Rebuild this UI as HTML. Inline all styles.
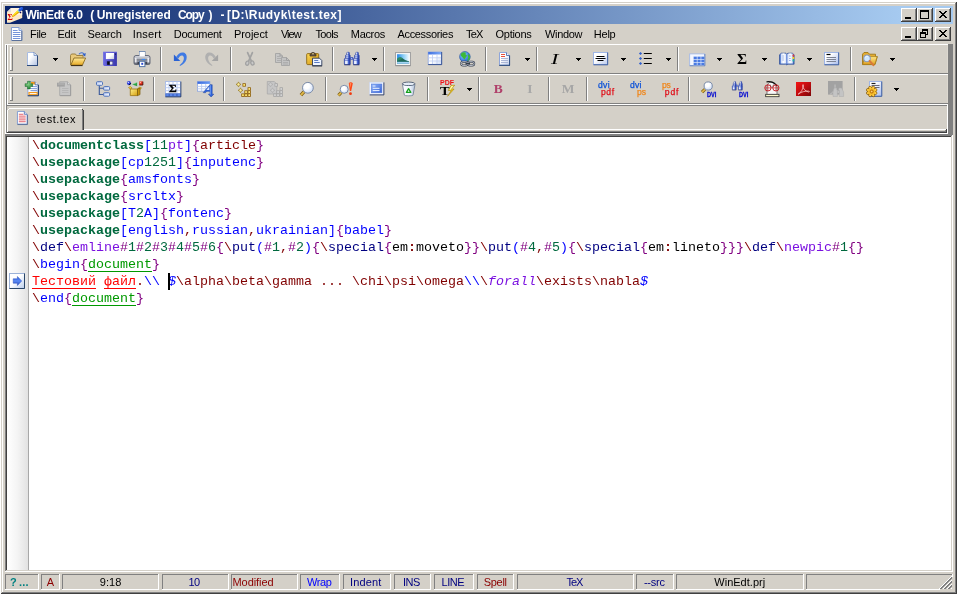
<!DOCTYPE html>
<html lang="en"><head><meta charset="utf-8"><title>WinEdt 6.0 - test.tex</title>
<style>
html,body{margin:0;padding:0;}
body{will-change:transform;width:958px;height:597px;background:#fff;position:relative;overflow:hidden;font-family:'Liberation Sans','DejaVu Sans',sans-serif;font-size:11px;}
body>div,body>span,body>svg{position:absolute;}
.ln{font-family:'Liberation Mono','DejaVu Sans Mono',monospace;font-size:13.3333px;line-height:17px;}
span{white-space:pre;}
svg{overflow:visible;}
</style></head><body>
<div style="left:1px;top:2px;width:956px;height:592px;background:#d4d0c8;"></div>
<div style="left:1px;top:593px;width:956px;height:1px;background:#404040;"></div>
<div style="left:956px;top:2px;width:1px;height:592px;background:#404040;"></div>
<div style="left:2px;top:592px;width:954px;height:1px;background:#808080;"></div>
<div style="left:955px;top:3px;width:1px;height:590px;background:#808080;"></div>
<div style="left:2px;top:3px;width:953px;height:1px;background:#fff;"></div>
<div style="left:2px;top:3px;width:1px;height:589px;background:#fff;"></div>
<div style="left:5px;top:6px;width:948px;height:18px;background:linear-gradient(to right,#0a246a 0%,#a6caf0 94.5%);"></div>
<svg style="left:7px;top:7px" width="16" height="16" viewBox="0 0 16 16">
<polygon points="0,5 4,1 12,1 15.200,4.500 15.200,11 3,15.700 0,15.700" fill="#fde8c6"/>
<polygon points="4,1 12,1 15.200,4.500 15.200,8 4,8" fill="#fff3de"/>
<polygon points="0,5 4,1 4,5" fill="#e4dcd4"/>
<text x="0.600" y="13" font-family="Liberation Serif,serif" font-weight="bold" font-size="8" fill="#d40000">Σ</text>
<polygon points="4.800,10.200 5.600,8.200 10.600,3.600 12.400,5.400 7,9.600" fill="#eaa400"/>
<polygon points="5.600,8.200 10.600,3.600 11.500,4.500 6.300,9" fill="#ffe920"/>
<polygon points="10.400,3.800 12.200,5.600 13,4.800 11.200,3" fill="#7fd6c4"/>
<polygon points="11.200,3 13,4.800 16.200,2 15.600,0 13.600,0.200" fill="#1f55dc"/>
<polygon points="12.200,1.400 14,0.400 15.200,0.600 13,2.400" fill="#4a7cf0"/>
<polygon points="13,4.800 12.400,5.800 14,6.400 14.400,5" fill="#1a1060"/>
</svg>
<span class="t tt" style="left:25.4px;top:6.84px;line-height:16px;font-size:12px;color:#fff;font-family:'Liberation Sans','DejaVu Sans',sans-serif;font-weight:bold;letter-spacing:-0.411px;">WinEdt 6.0</span>
<span class="t tt" style="left:90.2px;top:6.84px;line-height:16px;font-size:12px;color:#fff;font-family:'Liberation Sans','DejaVu Sans',sans-serif;font-weight:bold;letter-spacing:-1.2px;">(</span>
<span class="t tt" style="left:96.7px;top:6.84px;line-height:16px;font-size:12px;color:#fff;font-family:'Liberation Sans','DejaVu Sans',sans-serif;font-weight:bold;">Unregistered</span>
<span class="t tt" style="left:177.9px;top:6.84px;line-height:16px;font-size:12px;color:#fff;font-family:'Liberation Sans','DejaVu Sans',sans-serif;font-weight:bold;letter-spacing:-1.033px;">Copy</span>
<span class="t tt" style="left:208.5px;top:6.84px;line-height:16px;font-size:12px;color:#fff;font-family:'Liberation Sans','DejaVu Sans',sans-serif;font-weight:bold;">)</span>
<span class="t tt" style="left:220.4px;top:6.84px;line-height:16px;font-size:12px;color:#fff;font-family:'Liberation Sans','DejaVu Sans',sans-serif;font-weight:bold;letter-spacing:0.1px;">-</span>
<span class="t tt" style="left:227px;top:6.84px;line-height:16px;font-size:12px;color:#fff;font-family:'Liberation Sans','DejaVu Sans',sans-serif;font-weight:bold;letter-spacing:0.467px;">[D:\Rudyk\test.tex]</span>
<div style="left:901px;top:8px;width:16px;height:14px;background:#d4d0c8;"></div>
<div style="left:901px;top:8px;width:15px;height:1px;background:#fff;"></div>
<div style="left:901px;top:8px;width:1px;height:13px;background:#fff;"></div>
<div style="left:901px;top:21px;width:16px;height:1px;background:#404040;"></div>
<div style="left:916px;top:8px;width:1px;height:14px;background:#404040;"></div>
<div style="left:902px;top:20px;width:14px;height:1px;background:#808080;"></div>
<div style="left:915px;top:9px;width:1px;height:12px;background:#808080;"></div>
<div style="left:905px;top:17px;width:6px;height:2px;background:#000;"></div>
<div style="left:917px;top:8px;width:16px;height:14px;background:#d4d0c8;"></div>
<div style="left:917px;top:8px;width:15px;height:1px;background:#fff;"></div>
<div style="left:917px;top:8px;width:1px;height:13px;background:#fff;"></div>
<div style="left:917px;top:21px;width:16px;height:1px;background:#404040;"></div>
<div style="left:932px;top:8px;width:1px;height:14px;background:#404040;"></div>
<div style="left:918px;top:20px;width:14px;height:1px;background:#808080;"></div>
<div style="left:931px;top:9px;width:1px;height:12px;background:#808080;"></div>
<div style="left:920px;top:10px;width:9px;height:9px;background:#000;"></div>
<div style="left:921px;top:12px;width:7px;height:6px;background:#d4d0c8;"></div>
<div style="left:935px;top:8px;width:16px;height:14px;background:#d4d0c8;"></div>
<div style="left:935px;top:8px;width:15px;height:1px;background:#fff;"></div>
<div style="left:935px;top:8px;width:1px;height:13px;background:#fff;"></div>
<div style="left:935px;top:21px;width:16px;height:1px;background:#404040;"></div>
<div style="left:950px;top:8px;width:1px;height:14px;background:#404040;"></div>
<div style="left:936px;top:20px;width:14px;height:1px;background:#808080;"></div>
<div style="left:949px;top:9px;width:1px;height:12px;background:#808080;"></div>
<svg style="left:939px;top:11px" width="8" height="7" viewBox="0 0 8 7" shape-rendering="crispEdges"><path d="M0,0h2v1h1v1h2v-1h1v-1h2v1h-1v1h-1v1h-1v1h1v1h1v1h1v1h-2v-1h-1v-1h-2v1h-1v1h-2v-1h1v-1h1v-1h1v-1h-1v-1h-1v-1h-1z" fill="#000"/></svg>
<div style="left:901px;top:27px;width:16px;height:14px;background:#d4d0c8;"></div>
<div style="left:901px;top:27px;width:15px;height:1px;background:#fff;"></div>
<div style="left:901px;top:27px;width:1px;height:13px;background:#fff;"></div>
<div style="left:901px;top:40px;width:16px;height:1px;background:#404040;"></div>
<div style="left:916px;top:27px;width:1px;height:14px;background:#404040;"></div>
<div style="left:902px;top:39px;width:14px;height:1px;background:#808080;"></div>
<div style="left:915px;top:28px;width:1px;height:12px;background:#808080;"></div>
<div style="left:905px;top:36px;width:6px;height:2px;background:#000;"></div>
<div style="left:917px;top:27px;width:16px;height:14px;background:#d4d0c8;"></div>
<div style="left:917px;top:27px;width:15px;height:1px;background:#fff;"></div>
<div style="left:917px;top:27px;width:1px;height:13px;background:#fff;"></div>
<div style="left:917px;top:40px;width:16px;height:1px;background:#404040;"></div>
<div style="left:932px;top:27px;width:1px;height:14px;background:#404040;"></div>
<div style="left:918px;top:39px;width:14px;height:1px;background:#808080;"></div>
<div style="left:931px;top:28px;width:1px;height:12px;background:#808080;"></div>
<div style="left:922px;top:29px;width:6px;height:6px;background:#000;"></div>
<div style="left:923px;top:31px;width:4px;height:3px;background:#d4d0c8;"></div>
<div style="left:920px;top:32px;width:6px;height:6px;background:#000;"></div>
<div style="left:921px;top:34px;width:4px;height:3px;background:#d4d0c8;"></div>
<div style="left:935px;top:27px;width:16px;height:14px;background:#d4d0c8;"></div>
<div style="left:935px;top:27px;width:15px;height:1px;background:#fff;"></div>
<div style="left:935px;top:27px;width:1px;height:13px;background:#fff;"></div>
<div style="left:935px;top:40px;width:16px;height:1px;background:#404040;"></div>
<div style="left:950px;top:27px;width:1px;height:14px;background:#404040;"></div>
<div style="left:936px;top:39px;width:14px;height:1px;background:#808080;"></div>
<div style="left:949px;top:28px;width:1px;height:12px;background:#808080;"></div>
<svg style="left:939px;top:30px" width="8" height="7" viewBox="0 0 8 7" shape-rendering="crispEdges"><path d="M0,0h2v1h1v1h2v-1h1v-1h2v1h-1v1h-1v1h-1v1h1v1h1v1h1v1h-2v-1h-1v-1h-2v1h-1v1h-2v-1h1v-1h1v-1h1v-1h-1v-1h-1v-1h-1z" fill="#000"/></svg>
<svg style="left:11px;top:27px" width="11.300" height="14" viewBox="0 0 12 14" preserveAspectRatio="none">
<path d="M0.5,0.5h8l3,3v10h-11z" fill="#fff" stroke="#7f9ad0" stroke-width="1"/>
<path d="M8.5,0.5v3h3" fill="#dfe8f8" stroke="#7f9ad0" stroke-width="1"/>
<path d="M2,3.5h5M2,5.5h8M2,7.5h8M2,9.5h8M2,11.5h8" stroke="#6f8fd8" stroke-width="1"/>
<path d="M1,13.5h10.5M11.5,4v9.5" stroke="#5a6f98" stroke-width="1" fill="none"/>
</svg>
<span class="t mn" style="left:30px;top:26.19px;line-height:16px;font-size:11px;color:#000;font-family:'Liberation Sans','DejaVu Sans',sans-serif;letter-spacing:-0.333px;">File</span>
<span class="t mn" style="left:57.4px;top:26.19px;line-height:16px;font-size:11px;color:#000;font-family:'Liberation Sans','DejaVu Sans',sans-serif;letter-spacing:-0.133px;">Edit</span>
<span class="t mn" style="left:87.5px;top:26.19px;line-height:16px;font-size:11px;color:#000;font-family:'Liberation Sans','DejaVu Sans',sans-serif;letter-spacing:-0.1px;">Search</span>
<span class="t mn" style="left:132.7px;top:26.19px;line-height:16px;font-size:11px;color:#000;font-family:'Liberation Sans','DejaVu Sans',sans-serif;letter-spacing:0.2px;">Insert</span>
<span class="t mn" style="left:173.8px;top:26.19px;line-height:16px;font-size:11px;color:#000;font-family:'Liberation Sans','DejaVu Sans',sans-serif;letter-spacing:-0.286px;">Document</span>
<span class="t mn" style="left:233.9px;top:26.19px;line-height:16px;font-size:11px;color:#000;font-family:'Liberation Sans','DejaVu Sans',sans-serif;letter-spacing:-0.033px;">Project</span>
<span class="t mn" style="left:280.9px;top:26.19px;line-height:16px;font-size:11px;color:#000;font-family:'Liberation Sans','DejaVu Sans',sans-serif;letter-spacing:-0.967px;">View</span>
<span class="t mn" style="left:315.4px;top:26.19px;line-height:16px;font-size:11px;color:#000;font-family:'Liberation Sans','DejaVu Sans',sans-serif;letter-spacing:-0.65px;">Tools</span>
<span class="t mn" style="left:350.8px;top:26.19px;line-height:16px;font-size:11px;color:#000;font-family:'Liberation Sans','DejaVu Sans',sans-serif;letter-spacing:-0.32px;">Macros</span>
<span class="t mn" style="left:397.5px;top:26.19px;line-height:16px;font-size:11px;color:#000;font-family:'Liberation Sans','DejaVu Sans',sans-serif;letter-spacing:-0.34px;">Accessories</span>
<span class="t mn" style="left:466px;top:26.19px;line-height:16px;font-size:11px;color:#000;font-family:'Liberation Sans','DejaVu Sans',sans-serif;letter-spacing:-0.75px;">TeX</span>
<span class="t mn" style="left:495.5px;top:26.19px;line-height:16px;font-size:11px;color:#000;font-family:'Liberation Sans','DejaVu Sans',sans-serif;letter-spacing:-0.267px;">Options</span>
<span class="t mn" style="left:545px;top:26.19px;line-height:16px;font-size:11px;color:#000;font-family:'Liberation Sans','DejaVu Sans',sans-serif;letter-spacing:-0.34px;">Window</span>
<span class="t mn" style="left:593.8px;top:26.19px;line-height:16px;font-size:11px;color:#000;font-family:'Liberation Sans','DejaVu Sans',sans-serif;letter-spacing:-0.233px;">Help</span>
<div style="left:948px;top:44px;width:5px;height:91px;background:#808080;"></div>
<div style="left:5px;top:134px;width:948px;height:1px;background:#808080;"></div>
<div style="left:5px;top:44px;width:943px;height:1px;background:#fff;"></div>
<div style="left:5px;top:44px;width:1px;height:90px;background:#fff;"></div>
<div style="left:5px;top:133px;width:943px;height:1px;background:#fff;"></div>
<div style="left:947px;top:45px;width:1px;height:59px;background:#dcd8d0;"></div>
<div style="left:947px;top:104px;width:1px;height:30px;background:#fff;"></div>
<div style="left:6px;top:45px;width:1px;height:60px;background:#808080;"></div>
<div style="left:7px;top:45px;width:1px;height:60px;background:#fff;"></div>
<div style="left:8px;top:73px;width:940px;height:1px;background:#808080;"></div>
<div style="left:7px;top:74px;width:941px;height:1px;background:#fff;"></div>
<div style="left:8px;top:103px;width:940px;height:1px;background:#808080;"></div>
<div style="left:7px;top:104px;width:941px;height:1px;background:#fff;"></div>
<div style="left:10px;top:47px;width:1px;height:24px;background:#fff;"></div>
<div style="left:10px;top:47px;width:2px;height:1px;background:#fff;"></div>
<div style="left:12px;top:47px;width:1px;height:24px;background:#808080;"></div>
<div style="left:10px;top:70px;width:3px;height:1px;background:#808080;"></div>
<div style="left:11px;top:48px;width:1px;height:22px;background:#d4d0c8;"></div>
<div style="left:10px;top:77px;width:1px;height:24px;background:#fff;"></div>
<div style="left:10px;top:77px;width:2px;height:1px;background:#fff;"></div>
<div style="left:12px;top:77px;width:1px;height:24px;background:#808080;"></div>
<div style="left:10px;top:100px;width:3px;height:1px;background:#808080;"></div>
<div style="left:11px;top:78px;width:1px;height:22px;background:#d4d0c8;"></div>
<div style="left:6px;top:105px;width:941px;height:1px;background:#808080;"></div>
<div style="left:6px;top:105px;width:1px;height:28px;background:#808080;"></div>
<div style="left:84px;top:129px;width:862px;height:1px;background:#fff;"></div>
<div style="left:8px;top:131px;width:938px;height:1px;background:#808080;"></div>
<div style="left:7px;top:132px;width:940px;height:1px;background:#404040;"></div>
<div style="left:945px;top:130px;width:1px;height:2px;background:#808080;"></div>
<div style="left:946px;top:129px;width:1px;height:4px;background:#404040;"></div>
<div style="left:9px;top:108px;width:73px;height:1px;background:#fff;"></div>
<div style="left:7px;top:110px;width:1px;height:22px;background:#fff;"></div>
<div style="left:8px;top:109px;width:1px;height:1px;background:#fff;"></div>
<div style="left:82px;top:110px;width:1px;height:20px;background:#808080;"></div>
<div style="left:83px;top:110px;width:1px;height:20px;background:#404040;"></div>
<div style="left:82px;top:109px;width:1px;height:1px;background:#404040;"></div>
<svg style="left:17px;top:111px" width="11" height="14" viewBox="0 0 12 15" preserveAspectRatio="none">
<path d="M0.5,0.5h7.5l3,3v10.5h-10.5z" fill="#fff" stroke="#7f9ad0" stroke-width="1"/>
<path d="M8,0.5v3h3" fill="#e8eef8" stroke="#5a78b8" stroke-width="1"/>
<path d="M2,3.5h5M2,5.5h7.5M2,7.5h7.5M2,9.5h7.5M2,11.5h7.5" stroke="#e05560" stroke-width="1"/>
<path d="M0.5,14.5h11M11.5,4v10.5" stroke="#5a6f98" stroke-width="1" fill="none"/>
</svg>
<span class="t" style="left:36.5px;top:111.19px;line-height:16px;font-size:11px;color:#000;font-family:'Liberation Sans','DejaVu Sans',sans-serif;letter-spacing:0.5px;">test.tex</span>
<div style="left:160px;top:47px;width:1px;height:24px;background:#808080;"></div>
<div style="left:161px;top:47px;width:1px;height:24px;background:#fff;"></div>
<div style="left:230px;top:47px;width:1px;height:24px;background:#808080;"></div>
<div style="left:231px;top:47px;width:1px;height:24px;background:#fff;"></div>
<div style="left:332px;top:47px;width:1px;height:24px;background:#808080;"></div>
<div style="left:333px;top:47px;width:1px;height:24px;background:#fff;"></div>
<div style="left:383px;top:47px;width:1px;height:24px;background:#808080;"></div>
<div style="left:384px;top:47px;width:1px;height:24px;background:#fff;"></div>
<div style="left:485px;top:47px;width:1px;height:24px;background:#808080;"></div>
<div style="left:486px;top:47px;width:1px;height:24px;background:#fff;"></div>
<div style="left:536px;top:47px;width:1px;height:24px;background:#808080;"></div>
<div style="left:537px;top:47px;width:1px;height:24px;background:#fff;"></div>
<div style="left:677px;top:47px;width:1px;height:24px;background:#808080;"></div>
<div style="left:678px;top:47px;width:1px;height:24px;background:#fff;"></div>
<div style="left:850px;top:47px;width:1px;height:24px;background:#808080;"></div>
<div style="left:851px;top:47px;width:1px;height:24px;background:#fff;"></div>
<div style="left:83px;top:77px;width:1px;height:24px;background:#808080;"></div>
<div style="left:84px;top:77px;width:1px;height:24px;background:#fff;"></div>
<div style="left:153px;top:77px;width:1px;height:24px;background:#808080;"></div>
<div style="left:154px;top:77px;width:1px;height:24px;background:#fff;"></div>
<div style="left:223px;top:77px;width:1px;height:24px;background:#808080;"></div>
<div style="left:224px;top:77px;width:1px;height:24px;background:#fff;"></div>
<div style="left:325px;top:77px;width:1px;height:24px;background:#808080;"></div>
<div style="left:326px;top:77px;width:1px;height:24px;background:#fff;"></div>
<div style="left:427px;top:77px;width:1px;height:24px;background:#808080;"></div>
<div style="left:428px;top:77px;width:1px;height:24px;background:#fff;"></div>
<div style="left:478px;top:77px;width:1px;height:24px;background:#808080;"></div>
<div style="left:479px;top:77px;width:1px;height:24px;background:#fff;"></div>
<div style="left:548px;top:77px;width:1px;height:24px;background:#808080;"></div>
<div style="left:549px;top:77px;width:1px;height:24px;background:#fff;"></div>
<div style="left:586px;top:77px;width:1px;height:24px;background:#808080;"></div>
<div style="left:587px;top:77px;width:1px;height:24px;background:#fff;"></div>
<div style="left:688px;top:77px;width:1px;height:24px;background:#808080;"></div>
<div style="left:689px;top:77px;width:1px;height:24px;background:#fff;"></div>
<div style="left:854px;top:77px;width:1px;height:24px;background:#808080;"></div>
<div style="left:855px;top:77px;width:1px;height:24px;background:#fff;"></div>
<div style="left:53px;top:58px;width:5px;height:1px;background:#000;"></div>
<div style="left:54px;top:59px;width:3px;height:1px;background:#000;"></div>
<div style="left:55px;top:60px;width:1px;height:1px;background:#000;"></div>
<div style="left:372px;top:58px;width:5px;height:1px;background:#000;"></div>
<div style="left:373px;top:59px;width:3px;height:1px;background:#000;"></div>
<div style="left:374px;top:60px;width:1px;height:1px;background:#000;"></div>
<div style="left:525px;top:58px;width:5px;height:1px;background:#000;"></div>
<div style="left:526px;top:59px;width:3px;height:1px;background:#000;"></div>
<div style="left:527px;top:60px;width:1px;height:1px;background:#000;"></div>
<div style="left:576px;top:58px;width:5px;height:1px;background:#000;"></div>
<div style="left:577px;top:59px;width:3px;height:1px;background:#000;"></div>
<div style="left:578px;top:60px;width:1px;height:1px;background:#000;"></div>
<div style="left:621px;top:58px;width:5px;height:1px;background:#000;"></div>
<div style="left:622px;top:59px;width:3px;height:1px;background:#000;"></div>
<div style="left:623px;top:60px;width:1px;height:1px;background:#000;"></div>
<div style="left:666px;top:58px;width:5px;height:1px;background:#000;"></div>
<div style="left:667px;top:59px;width:3px;height:1px;background:#000;"></div>
<div style="left:668px;top:60px;width:1px;height:1px;background:#000;"></div>
<div style="left:717px;top:58px;width:5px;height:1px;background:#000;"></div>
<div style="left:718px;top:59px;width:3px;height:1px;background:#000;"></div>
<div style="left:719px;top:60px;width:1px;height:1px;background:#000;"></div>
<div style="left:762px;top:58px;width:5px;height:1px;background:#000;"></div>
<div style="left:763px;top:59px;width:3px;height:1px;background:#000;"></div>
<div style="left:764px;top:60px;width:1px;height:1px;background:#000;"></div>
<div style="left:807px;top:58px;width:5px;height:1px;background:#000;"></div>
<div style="left:808px;top:59px;width:3px;height:1px;background:#000;"></div>
<div style="left:809px;top:60px;width:1px;height:1px;background:#000;"></div>
<div style="left:890px;top:58px;width:5px;height:1px;background:#000;"></div>
<div style="left:891px;top:59px;width:3px;height:1px;background:#000;"></div>
<div style="left:892px;top:60px;width:1px;height:1px;background:#000;"></div>
<div style="left:467px;top:88px;width:5px;height:1px;background:#000;"></div>
<div style="left:468px;top:89px;width:3px;height:1px;background:#000;"></div>
<div style="left:469px;top:90px;width:1px;height:1px;background:#000;"></div>
<div style="left:894px;top:88px;width:5px;height:1px;background:#000;"></div>
<div style="left:895px;top:89px;width:3px;height:1px;background:#000;"></div>
<div style="left:896px;top:90px;width:1px;height:1px;background:#000;"></div>
<svg style="left:25px;top:51px" width="16" height="16" viewBox="0 0 16 16"><defs><linearGradient id="g1" x1="0" y1="0" x2="1" y2="1"><stop offset=".35" stop-color="#fff"/><stop offset="1" stop-color="#b4c4e4"/></linearGradient></defs>
<path d="M2.5,1.5h6.5l3,3v9.5h-9.5z" fill="url(#g1)"/>
<path d="M2.5,14v-12.5h6.5" fill="none" stroke="#a9bde3"/>
<path d="M9,1.5l3,3" fill="none" stroke="#3f5f97"/>
<path d="M9,1.5v3h3" fill="#e9effa" stroke="#6f8fc7" stroke-width=".8"/>
<path d="M12.5,4.5v9.5M2,14.5h11" fill="none" stroke="#2c4a7c"/></svg>
<svg style="left:70px;top:51px" width="16" height="16" viewBox="0 0 16 16"><defs><linearGradient id="g2" x1="0" y1="0" x2="0" y2="1"><stop offset="0" stop-color="#ffeb9a"/><stop offset="1" stop-color="#e6a822"/></linearGradient></defs>
<path d="M0.5,14v-9.5l1-1.5h4l1,1.5h6.5v2" fill="#e9c97a" stroke="#9c8040" stroke-width="1"/>
<path d="M0.8,14.2l3.2-7.2h11.6l-3.2,7.2z" fill="url(#g2)" stroke="#8a6a20" stroke-width=".9"/>
<path d="M1,14.6h11.5" stroke="#3a2a10" stroke-width="1"/>
<path d="M9,3.2c1.5-2.2,4.6-2,5.6,0.6" fill="none" stroke="#3f6fd0" stroke-width="1.1"/>
<path d="M15.8,2l-0.6,3.4l-2.8-1.6z" fill="#2f5fc8"/></svg>
<svg style="left:102px;top:51px" width="16" height="16" viewBox="0 0 16 16"><defs><linearGradient id="g3" x1="0" y1="0" x2="1" y2="0"><stop offset="0" stop-color="#6c6ae4"/><stop offset="1" stop-color="#3836ac"/></linearGradient>
<linearGradient id="g3b" x1="0" y1="0" x2="1" y2="1"><stop offset=".5" stop-color="#fff"/><stop offset="1" stop-color="#c8cce0"/></linearGradient></defs>
<path d="M1.100,1.100h13.800v13.800h-12.800l-1,-1z" fill="url(#g3)"/>
<path d="M1.100,1.100h13.800" stroke="#7a78ec" stroke-width=".8"/>
<rect x="3.900" y="2" width="8.200" height="6.100" fill="url(#g3b)"/>
<rect x="4.900" y="10.100" width="6" height="3.900" fill="#2a2a78"/>
<rect x="5.300" y="10.600" width="2.400" height="3" fill="#0a0a14"/>
<rect x="7.900" y="10.600" width="2.600" height="3" fill="#e4e6f2"/>
<rect x="13" y="2.600" width="1" height="1.200" fill="#1c1c60"/></svg>
<svg style="left:134px;top:51px" width="16" height="16" viewBox="0 0 16 16"><defs><linearGradient id="g4" x1="0" y1="0" x2="0" y2="1"><stop offset="0" stop-color="#d4d6de"/><stop offset=".35" stop-color="#b4b8c2"/><stop offset=".45" stop-color="#80848f"/><stop offset=".75" stop-color="#989ca8"/><stop offset="1" stop-color="#484c56"/></linearGradient></defs>
<rect x="5.500" y="0.500" width="5.400" height="6" fill="#fff" stroke="#5878a8" stroke-width="1"/>
<path d="M2,4.500h12a2,2 0 0 1 2,2v5.500a1.500,1.500 0 0 1 -1.500,1.500h-13a1.500,1.500 0 0 1 -1.500,-1.500v-5.500a2,2 0 0 1 2,-2z" fill="url(#g4)" stroke="#5a6070" stroke-width=".9"/>
<rect x="0.800" y="6.800" width="1.800" height="4.600" rx=".8" fill="#ececf0"/><rect x="13.400" y="6.800" width="1.800" height="4.600" rx=".8" fill="#ececf0"/>
<rect x="5.500" y="0.800" width="5.400" height="4.500" fill="#fff"/>
<rect x="7.700" y="7.900" width="3.500" height="1.200" fill="#3a8af4"/>
<rect x="3.500" y="11" width="9.400" height="2" fill="#3c404c"/>
<rect x="5.500" y="10.300" width="5.400" height="5.300" fill="#fff" stroke="#5878a8" stroke-width="1"/>
<rect x="7.300" y="11.800" width="1.900" height="2" fill="#2848d0"/></svg>
<svg style="left:172px;top:51px" width="16" height="16" viewBox="0 0 16 16"><path d="M1.900,3.400v6.700l6.400,-0.200z" fill="#2a62d4"/><path d="M4.200,6c1.600,-3.200 4.600,-5 7.200,-4.400c2.800,0.700 4,3.600 3,6.800c-0.900,2.800 -3.200,5 -6.400,6.600l-0.400,-0.800c2.400,-1.800 3.800,-3.800 4.200,-6c0.400,-2.200 -0.400,-3.600 -1.800,-3.800c-1.400,-0.200 -2.600,1 -3.600,3.200z" fill="#3f7ae4"/></svg>
<svg style="left:204px;top:51px" width="16" height="16" viewBox="0 0 16 16"><g transform="translate(16,0) scale(-1,1)"><path d="M1.900,3.400v6.700l6.400,-0.200z" fill="#a4a4a4"/><path d="M4.200,6c1.600,-3.200 4.600,-5 7.200,-4.400c2.800,0.700 4,3.600 3,6.800c-0.900,2.800 -3.200,5 -6.400,6.600l-0.400,-0.800c2.400,-1.800 3.800,-3.800 4.200,-6c0.400,-2.200 -0.400,-3.600 -1.800,-3.800c-1.400,-0.200 -2.600,1 -3.600,3.200z" fill="#b0b0b0"/></g></svg>
<svg style="left:242px;top:51px" width="16" height="16" viewBox="0 0 16 16"><g fill="none" stroke="#a2a2a2" stroke-width="1.700" stroke-linecap="round">
<path d="M5.600,1.600l4,9M10.400,1.600l-4,9"/></g>
<g fill="#c8c8c8" stroke="#a2a2a2" stroke-width="1.300"><ellipse cx="5.300" cy="12.200" rx="1.600" ry="2.100" transform="rotate(20 5.300 12.200)"/><ellipse cx="10.400" cy="12" rx="1.600" ry="2.100" transform="rotate(-20 10.400 12)"/></g></svg>
<svg style="left:274px;top:51px" width="16" height="16" viewBox="0 0 16 16"><g stroke="#a4a4a4" stroke-width=".9">
<path d="M1.500,2.500h4.500l2.500,2.500v6.500h-7z" fill="#c6c6c6"/>
<path d="M7.500,6.500h5l3,3v5h-8z" fill="#c2c2c2"/>
<path d="M3,5.500h3M3,7.500h4M3,9.500h4M9,9.500h3M9,11.500h5M9,13h5" stroke="#acacac"/>
<path d="M6,2.500v2.500h2.500M12.500,6.500v3h3" fill="none" stroke="#9c9c9c"/></g></svg>
<svg style="left:306px;top:51px" width="16" height="16" viewBox="0 0 16 16"><defs><linearGradient id="g9" x1="0" y1="0" x2="1" y2="1"><stop offset="0" stop-color="#ffdc58"/><stop offset="1" stop-color="#cc8c0c"/></linearGradient></defs>
<rect x="0.700" y="2.600" width="12" height="11" rx="1" fill="url(#g9)" stroke="#8a6414" stroke-width=".9"/>
<path d="M4,5v-1.800h1.800v-1.600h2.400v1.600h1.800v1.800z" fill="#6a5a4a" stroke="#3a2c1c" stroke-width=".7"/>
<rect x="6.300" y="2.200" width="1.400" height="1.100" fill="#ffe9a0"/>
<path d="M6.500,7.200h7l2.300,2.300v5.200h-9.300z" fill="#eef4ff" stroke="#2a3a5a" stroke-width=".9"/>
<path d="M8.200,9.500h4M8.200,11.500h5.500" stroke="#5a7ac4" stroke-width="1.200"/>
<path d="M6.300,15h9.800" stroke="#1a2030" stroke-width=".7"/></svg>
<svg style="left:344px;top:51px" width="16" height="16" viewBox="0 0 16 16"><defs><linearGradient id="g10" x1="0" y1="0" x2="1" y2="0"><stop offset="0" stop-color="#2a48b8"/><stop offset=".22" stop-color="#f4f8ff"/><stop offset=".48" stop-color="#dfe8ff"/><stop offset=".68" stop-color="#4a6ad8"/><stop offset="1" stop-color="#1c3090"/></linearGradient></defs>
<g id="g10h"><rect x="2.800" y="1.300" width="2.600" height="2.900" rx=".6" fill="url(#g10)" stroke="#2038a0" stroke-width=".5"/>
<rect x="1.600" y="4" width="4.600" height="3.800" rx=".5" fill="url(#g10)" stroke="#2038a0" stroke-width=".5"/>
<rect x="0.300" y="7.500" width="6" height="6" rx=".5" fill="url(#g10)" stroke="#2038a0" stroke-width=".5"/>
<path d="M0.300,13.800h6" stroke="#16246c" stroke-width=".8"/><path d="M1.600,5.900h4.600M0.500,9.200h5.600" stroke="#2a44b4" stroke-width=".7"/></g>
<use href="#g10h" x="9"/>
<rect x="6.300" y="6.200" width="2.900" height="2.400" fill="#2c48b8"/><rect x="7.100" y="6.900" width="1.200" height="1" fill="#c4d4ff"/></svg>
<svg style="left:395px;top:51px" width="16" height="16" viewBox="0 0 16 16"><defs><linearGradient id="g11" x1="0" y1="0" x2="1" y2="0"><stop offset="0" stop-color="#1f86e6"/><stop offset=".55" stop-color="#8fd0f6"/><stop offset="1" stop-color="#f0faff"/></linearGradient></defs>
<rect x="0.500" y="1.500" width="15" height="13" fill="#f4f4f4" stroke="#a2a2a2" stroke-width="1"/>
<rect x="2.100" y="3.200" width="12" height="9.600" fill="url(#g11)"/>
<path d="M2.100,9c1.500,-2.500 4,-3 6.500,-1c2,1.500 4,2 5.500,2.300v2.500h-12z" fill="#1f6a5a"/>
<path d="M2.100,7.500c2,-2 4,-2 6,0l-6,2.500z" fill="#2c8a6a"/>
<rect x="2.100" y="10.800" width="12" height="2" fill="#7fc0ee"/><rect x="2.100" y="11.600" width="12" height=".6" fill="#dff2ff"/>
<path d="M0.500,14.800h15" stroke="#8a8a8a" stroke-width=".7"/></svg>
<svg style="left:427px;top:51px" width="16" height="16" viewBox="0 0 16 16"><defs><linearGradient id="g12" x1="0" y1="0" x2="1" y2="0"><stop offset="0" stop-color="#3f70e0"/><stop offset="1" stop-color="#7eaaf8"/></linearGradient>
<linearGradient id="g12b" x1="0" y1="0" x2="1" y2="1"><stop offset=".5" stop-color="#fff"/><stop offset="1" stop-color="#cfdcf6"/></linearGradient></defs>
<rect x="1.200" y="1" width="13.300" height="12.400" fill="url(#g12b)" stroke="#8aa4e0" stroke-width=".8"/>
<rect x="1.200" y="1" width="13.300" height="2.500" fill="url(#g12)"/>
<path d="M1.200,6.800h13.300M1.200,10h13.300M5.500,3.500v9.900M10,3.500v9.900" stroke="#bccdf2" stroke-width=".8"/>
<path d="M1.200,13.600h13.500M14.700,1v12.600" stroke="#2c4a8c" stroke-width=".9"/></svg>
<svg style="left:459px;top:51px" width="16" height="16" viewBox="0 0 16 16"><defs><radialGradient id="g13" cx=".35" cy=".3" r=".8"><stop offset="0" stop-color="#8ad4ff"/><stop offset="1" stop-color="#1c58d4"/></radialGradient></defs>
<g transform="translate(0,0.600)"><circle cx="5.900" cy="5.200" r="5.300" fill="url(#g13)" stroke="#1c4a9c" stroke-width=".6"/>
<path d="M2,2.200c1.600,-1.800 3.800,-1.800 5,-1c-0.800,1.400 -0.400,2.200 1,2.800c-0.400,1.400 -1.800,2 -2.200,4c-1.400,-0.400 -1.600,-2.200 -3,-2.800c-1,-0.800 -1.200,-2 -0.800,-3z" fill="#3cb83a"/>
<path d="M9,2.400c1.400,0.600 2.200,2 2.200,3.400c-0.400,1.800 -1.400,3 -2.600,3.800c-0.600,-1 0.200,-2.400 0.800,-3.600c-0.600,-1.200 -0.800,-2.400 -0.400,-3.600z" fill="#3cb83a"/></g>
<g fill="none" stroke="#363e4c" stroke-width="2"><rect x="2.200" y="10.700" width="6.400" height="3.800" rx="1.900"/><rect x="8.800" y="10.700" width="6.400" height="3.800" rx="1.900"/></g>
<g fill="none" stroke="#e8eef8" stroke-width=".7"><rect x="2.200" y="10.700" width="6.400" height="3.800" rx="1.900"/><rect x="8.800" y="10.700" width="6.400" height="3.800" rx="1.900"/></g>
<path d="M6.500,12.600h4.500" stroke="#363e4c" stroke-width="1.600"/></svg>
<svg style="left:497px;top:51px" width="16" height="16" viewBox="0 0 16 16"><defs><linearGradient id="g14" x1="0" y1="0" x2="1" y2="1"><stop offset=".4" stop-color="#fff"/><stop offset="1" stop-color="#c0cce8"/></linearGradient></defs>
<path d="M2.500,1.500h7l3,3v9.500h-10z" fill="url(#g14)" stroke="#8fa6da" stroke-width="1"/>
<path d="M9.500,1.500v3h3" fill="#eef2fb" stroke="#4f6fae" stroke-width=".9"/>
<path d="M4,3.500h4M4,5.500h4" stroke="#e8503a" stroke-width="1.100"/>
<path d="M4,7.500h7M4,9.500h7M4,11.500h7" stroke="#a4b0d4" stroke-width=".9"/>
<path d="M12.600,4.500v9.800M2.200,14.400h10.800" stroke="#2c4a7c" stroke-width="1"/></svg>
<span class="t" style="left:550.9px;top:51.55px;line-height:16px;font-size:14px;color:#000;font-family:'Liberation Serif','DejaVu Serif',serif;font-style:italic;letter-spacing:1.5px;transform:scaleX(1.6);transform-origin:0 0;">I</span>
<svg style="left:593px;top:51px" width="16" height="16" viewBox="0 0 16 16"><defs><linearGradient id="g15" x1="0" y1="0" x2="1" y2="1"><stop offset=".4" stop-color="#fff"/><stop offset="1" stop-color="#b8c8ec"/></linearGradient></defs>
<rect x="0.500" y="1.500" width="14" height="12" fill="url(#g15)" stroke="#9fb6e6" stroke-width="1"/>
<path d="M0.500,13.800h14.300M14.700,1.500v12.300" stroke="#3f5f9f" stroke-width="1"/>
<path d="M3.500,5.500h8M2.500,7.500h10M4.500,9.500h6" stroke="#000" stroke-width="1"/></svg>
<svg style="left:638px;top:51px" width="16" height="16" viewBox="0 0 16 16"><g fill="#2f5fd0"><path d="M2.500,1l1.600,1.500l-1.600,1.500l-1.600,-1.500z"/><path d="M2.500,6l1.600,1.500l-1.600,1.500l-1.600,-1.500z"/><path d="M2.500,11l1.600,1.500l-1.600,1.500l-1.600,-1.500z"/></g>
<path d="M5.800,2.500h8M5.800,7.500h8M5.800,12.500h8" stroke="#000" stroke-width="1.100"/></svg>
<svg style="left:689px;top:51px" width="16" height="16" viewBox="0 0 16 16"><rect x="0.700" y="2.900" width="15" height="11.600" fill="#f4f7ff" stroke="#9cb4e8" stroke-width=".8"/>
<rect x="4.200" y="5.200" width="11.500" height="9.300" fill="#dfe8fb"/>
<g fill="#4a7ae2"><rect x="4.7" y="5.7" width="3.100" height="2.300"/><rect x="4.7" y="8.7" width="3.100" height="2.300"/><rect x="4.7" y="11.7" width="3.100" height="2.300"/><rect x="8.5" y="5.7" width="3.100" height="2.300"/><rect x="8.5" y="8.7" width="3.100" height="2.300"/><rect x="8.5" y="11.7" width="3.100" height="2.300"/><rect x="12.3" y="5.7" width="3.100" height="2.300"/><rect x="12.3" y="8.7" width="3.100" height="2.300"/><rect x="12.3" y="11.7" width="3.100" height="2.300"/></g>
<path d="M0.700,14.800h15.300M15.900,3v11.800" stroke="#5a7ab8" stroke-width=".8"/></svg>
<span class="t" style="left:737px;top:51.55px;line-height:16px;font-size:14px;color:#000;font-family:'Liberation Serif','DejaVu Serif',serif;font-weight:bold;letter-spacing:0.4px;transform:scaleX(1.1);transform-origin:0 0;">Σ</span>
<svg style="left:779px;top:51px" width="16" height="16" viewBox="0 0 16 16"><defs><linearGradient id="g18" x1="0" y1="0" x2="1" y2="0"><stop offset="0" stop-color="#c8d8f8"/><stop offset=".5" stop-color="#ffffff"/><stop offset="1" stop-color="#d4e0f8"/></linearGradient></defs>
<path d="M0.500,3.800l1.800,-1.600h4.400l1.100,1l1.100,-1h4.400l1.800,1.600v9.400h-6.200l-1.100,0.700l-1.100,-0.700h-6.200z" fill="#4a74cc" stroke="#2c4a94" stroke-width=".7"/>
<path d="M1.800,2.800c1.800,-0.800 3.800,-0.800 5.600,0.400v9.300h-5.600z" fill="url(#g18)"/><path d="M13.800,2.800c-1.800,-0.800 -3.800,-0.800 -5.600,0.400v9.300h5.600z" fill="url(#g18)"/>
<path d="M7.800,3.200v9.500" stroke="#6a8ad8" stroke-width=".7"/>
<path d="M3.500,5h1.200M3.500,7h1.200M3.500,9h1.200M10.300,5h1.200M10.300,7.500h1.200M10.300,9.500h1.200" stroke="#6a8ad8" stroke-width=".9"/>
<rect x="13.500" y="3.600" width="1.700" height="2" fill="#e83a3a"/><rect x="13.500" y="6" width="1.700" height="2" fill="#f2d21a"/><rect x="13.500" y="8.400" width="1.700" height="2" fill="#22b4a4"/></svg>
<svg style="left:824px;top:51px" width="16" height="16" viewBox="0 0 16 16"><defs><linearGradient id="g19" x1="0" y1="0" x2="1" y2="1"><stop offset=".3" stop-color="#fff"/><stop offset="1" stop-color="#a8bcec"/></linearGradient></defs>
<rect x="0.500" y="1.500" width="14" height="12" fill="url(#g19)" stroke="#9fb6e6" stroke-width="1"/>
<path d="M0.500,13.800h14.300M14.700,1.500v12.300" stroke="#3f5f9f" stroke-width="1"/>
<path d="M2.500,3.500h4" stroke="#000" stroke-width="1.200"/><path d="M2.500,6.500h9.500M2.500,8.500h9.500M2.500,10.500h9.500" stroke="#7e8494" stroke-width="1"/></svg>
<svg style="left:862px;top:51px" width="16" height="16" viewBox="0 0 16 16"><defs><linearGradient id="g20" x1="0" y1="0" x2="0" y2="1"><stop offset="0" stop-color="#ffe88a"/><stop offset="1" stop-color="#e2a020"/></linearGradient></defs>
<path d="M0.500,3.200l1.500,-1.700h4l1.500,1.700h6v2.400h1.800l-2.300,8h-12.500z" fill="#e4ac30" stroke="#a07818" stroke-width=".9"/>
<path d="M0.700,13.400l2,-7.800h12.400l-2.200,7.800z" fill="url(#g20)" stroke="#a07818" stroke-width=".7"/>
<circle cx="5" cy="7.400" r="3.300" fill="#cfe8ff" stroke="#8a9ab8" stroke-width="1.100"/>
<path d="M3.400,6.200a2.200,2.200 0 0 1 2.400,-1" stroke="#fff" stroke-width="1" fill="none"/>
<path d="M7.600,10l3.800,4.200" stroke="#d8783a" stroke-width="2" stroke-linecap="round"/></svg>
<svg style="left:25px;top:81px" width="16" height="16" viewBox="0 0 16 16"><defs><linearGradient id="g21" x1="0" y1="0" x2="1" y2="1"><stop offset=".4" stop-color="#fff"/><stop offset="1" stop-color="#c4d0ec"/></linearGradient>
<radialGradient id="g21b" cx=".4" cy=".35" r=".7"><stop offset="0" stop-color="#8ad48a"/><stop offset="1" stop-color="#1c7a2c"/></radialGradient></defs>
<path d="M2.900,0.800h7.200l3,3v10.700h-10.200z" fill="url(#g21)" stroke="#7f9ad8" stroke-width=".8"/>
<rect x="6" y="0.800" width="4.600" height="2.600" fill="#f59a1c"/>
<path d="M10.100,0.800v3h3" fill="#eef2fb" stroke="#3f5f9e" stroke-width=".8"/>
<path d="M6.500,5.500h5.500M5.500,7.500h6.500M5.500,9.500h6.500" stroke="#7f9ad8" stroke-width=".9"/>
<rect x="3.400" y="11" width="9.300" height="3.400" fill="#f59a1c"/><rect x="4.600" y="12.100" width="7" height="1" fill="#fff"/>
<path d="M2.700,14.800h10.800M13.400,3.800v11" stroke="#1c3a6c" stroke-width="1"/>
<path d="M2.500,0.300h2.800v2.400h2.400v2.800h-2.400v2.400h-2.800v-2.400h-2.400v-2.800h2.400z" fill="url(#g21b)" stroke="#1c6a2c" stroke-width=".5"/></svg>
<svg style="left:57px;top:81px" width="16" height="16" viewBox="0 0 16 16"><path d="M2.700,0.700h7.800l3,3v10.800h-10.800z" fill="#c6c6c6" stroke="#aaaaaa" stroke-width=".9"/>
<path d="M10.500,0.700v3h3" fill="#d8d8d8" stroke="#a2a2a2" stroke-width=".8"/>
<path d="M5,7.500h6.500M5,9.500h6.500M5,11.500h6.500" stroke="#b4b4b4" stroke-width=".9"/>
<path d="M13.700,4v10.700h-10.500" fill="none" stroke="#9a9a9a" stroke-width=".9"/>
<rect x="0" y="1.700" width="7.800" height="3.900" fill="#a2a2a2"/><rect x="0.800" y="2.500" width="6.200" height="1" fill="#b8b8b8"/></svg>
<svg style="left:95px;top:81px" width="16" height="16" viewBox="0 0 16 16"><defs><linearGradient id="g23" x1="0" y1="0" x2="1" y2="1"><stop offset="0" stop-color="#b4c8f4"/><stop offset="1" stop-color="#ffffff"/></linearGradient></defs>
<path d="M4.300,4.500v9h4M4.300,7.300h4" fill="none" stroke="#3a5a9c" stroke-width="1.100"/>
<g fill="url(#g23)" stroke="#4f72b8" stroke-width="1"><rect x="1.500" y="0.700" width="6" height="3.600" rx=".900"/><rect x="8.600" y="5.600" width="6" height="3.500" rx=".900"/><rect x="8.600" y="11.700" width="6" height="3.500" rx=".900"/></g></svg>
<svg style="left:127px;top:81px" width="16" height="16" viewBox="0 0 16 16"><defs><linearGradient id="g24" x1="0" y1="0" x2="1" y2="1"><stop offset="0" stop-color="#fff08a"/><stop offset="1" stop-color="#d6a010"/></linearGradient></defs>
<circle cx="1.900" cy="2" r="2" fill="#2a3ad8"/><circle cx="1.400" cy="1.500" r=".8" fill="#c8d4ff"/><path d="M1.800,3.800a2,2 0 0 0 2,-1.800" stroke="#060a30" stroke-width="1" fill="none"/>
<path d="M10.100,1.400v3.800l-4.800,-1.800z" fill="#2ea044"/><path d="M10.100,1.400l-4.800,2" stroke="#8ad49a" stroke-width=".6"/>
<rect x="12.200" y="0.400" width="3.700" height="3.700" fill="#e4301c"/><rect x="12.800" y="0.900" width="1.300" height="1.300" fill="#ffb0a0"/><path d="M12.400,4h3.500v-3.400" stroke="#3a0a04" stroke-width=".8" fill="none"/>
<path d="M3.300,8l-1.800,-1.400l1.800,-1.200l1.800,1.600z" fill="#f6d040" stroke="#a07a10" stroke-width=".6"/>
<path d="M10.500,8l2,-2l2,0.800l-1.600,2z" fill="#e8b820" stroke="#a07a10" stroke-width=".6"/>
<path d="M3.300,8h7.200v6.600h-7.200z" fill="url(#g24)" stroke="#9a7410" stroke-width=".8"/>
<path d="M10.500,8l2.500,-0.800v6.400l-2.500,1z" fill="#c8960c" stroke="#7a5a08" stroke-width=".7"/></svg>
<svg style="left:165px;top:81px" width="16" height="16" viewBox="0 0 16 16"><rect x="0.400" y="0.600" width="15.200" height="15" fill="#fff" stroke="#9db4e6" stroke-width=".8"/>
<path d="M0.400,3.700h15.200M0.400,6.700h15.200M0.400,9.700h15.200M4,0.600v12M8,0.600v3M12,0.600v12" stroke="#b8caf0" stroke-width=".9"/>
<rect x="0.400" y="12.300" width="15.200" height="3.300" fill="#3a62c4"/>
<g fill="#5a86e6"><rect x="1.200" y="13" width="2.400" height="2"/><rect x="4.800" y="13" width="2.600" height="2"/><rect x="8.600" y="13" width="2.600" height="2"/><rect x="12.600" y="13" width="2.400" height="2"/></g>
<path d="M0.400,15.900h15.500M15.900,0.600v15.300" stroke="#1c305c" stroke-width=".8"/></svg>
<span class="t" style="left:169px;top:81.26px;line-height:16px;font-size:10.5px;color:#000;font-family:'Liberation Serif','DejaVu Serif',serif;font-weight:bold;letter-spacing:0.1px;transform:scaleX(1.12);transform-origin:0 0;-webkit-text-stroke:0.35px #000;">Σ</span>
<svg style="left:197px;top:81px" width="16" height="16" viewBox="0 0 16 16"><defs><linearGradient id="g26" x1="0" y1="0" x2="1" y2="0"><stop offset="0" stop-color="#3868dc"/><stop offset="1" stop-color="#6a9af4"/></linearGradient></defs>
<rect x="0.500" y="0.600" width="12.400" height="9.600" fill="#fff" stroke="#8aa4e0" stroke-width=".8"/>
<rect x="0.500" y="0.600" width="12.400" height="2.300" fill="url(#g26)"/>
<path d="M0.500,5.400h12.400M0.500,7.800h12.400M4.600,2.900v7.300M8.700,2.900v7.300" stroke="#b8caf0" stroke-width=".9"/>
<path d="M6.200,11.600l6.800,-7.900h2.200v9.500h1.600l-2.700,2.800l-2.700,-2.800h1.600v-3h-3.200l-1.400,1.600z" fill="#2f64dc" stroke="#1c409c" stroke-width=".5"/>
<path d="M9.300,9h3v-3.600z" fill="#d8e4fb"/>
<path d="M13.400,4.200v9.400" stroke="#7aa4f4" stroke-width=".8"/></svg>
<svg style="left:235px;top:81px" width="16" height="16" viewBox="0 0 16 16"><g fill="#f6cc2a" stroke="#8a5c10" stroke-width=".8"><rect x="13.000" y="6.700" width="2.500" height="2.500"/><rect x="9.800" y="9.800" width="2.500" height="2.500"/><rect x="13.000" y="9.800" width="2.500" height="2.500"/><rect x="6.700" y="12.900" width="2.500" height="2.500"/><rect x="9.800" y="12.900" width="2.500" height="2.500"/><rect x="13.000" y="12.900" width="2.500" height="2.500"/><rect x="7.900" y="2.700" width="2.500" height="2.500"/></g><rect x="13.600" y="7.300" width="1.300" height="1.300" fill="#fff6b0"/><rect x="10.400" y="10.400" width="1.300" height="1.300" fill="#fff6b0"/><rect x="13.600" y="10.400" width="1.300" height="1.300" fill="#fff6b0"/><rect x="7.300" y="13.500" width="1.300" height="1.300" fill="#fff6b0"/><rect x="10.400" y="13.500" width="1.300" height="1.300" fill="#fff6b0"/><rect x="13.600" y="13.500" width="1.300" height="1.300" fill="#fff6b0"/><rect x="8.500" y="3.300" width="1.300" height="1.300" fill="#fff6b0"/><path d="M3.5,0.8999999999999999l0.800,1.700l1.700,0.800l-1.700,0.800l-0.800,1.700l-0.800,-1.700l-1.700,-0.800l1.700,-0.800z" fill="#fff09a" stroke="#8a6a10" stroke-width=".6"/><path d="M5.5,6.800000000000001l0.800,1.700l1.700,0.800l-1.700,0.800l-0.800,1.700l-0.800,-1.700l-1.700,-0.800l1.700,-0.800z" fill="#fff09a" stroke="#8a6a10" stroke-width=".6"/></svg>
<svg style="left:267px;top:81px" width="16" height="16" viewBox="0 0 16 16"><path d="M0.300,0.500h7l2.500,2.500v10h-9.500z" fill="#c6c6c6" stroke="#ababab" stroke-width=".8"/><g fill="#cccccc" stroke="#a4a4a4" stroke-width=".8"><rect x="13.000" y="6.700" width="2.500" height="2.500"/><rect x="9.800" y="9.800" width="2.500" height="2.500"/><rect x="13.000" y="9.800" width="2.500" height="2.500"/><rect x="6.700" y="12.900" width="2.500" height="2.500"/><rect x="9.800" y="12.900" width="2.500" height="2.500"/><rect x="13.000" y="12.900" width="2.500" height="2.500"/><rect x="7.900" y="2.700" width="2.500" height="2.500"/></g><rect x="13.600" y="7.300" width="1.300" height="1.300" fill="#d6d6d6"/><rect x="10.400" y="10.400" width="1.300" height="1.300" fill="#d6d6d6"/><rect x="13.600" y="10.400" width="1.300" height="1.300" fill="#d6d6d6"/><rect x="7.300" y="13.500" width="1.300" height="1.300" fill="#d6d6d6"/><rect x="10.400" y="13.500" width="1.300" height="1.300" fill="#d6d6d6"/><rect x="13.600" y="13.500" width="1.300" height="1.300" fill="#d6d6d6"/><rect x="8.500" y="3.300" width="1.300" height="1.300" fill="#d6d6d6"/><path d="M3.5,0.8999999999999999l0.800,1.700l1.700,0.800l-1.700,0.800l-0.800,1.700l-0.800,-1.700l-1.700,-0.800l1.700,-0.800z" fill="#d0d0d0" stroke="#a8a8a8" stroke-width=".6"/><path d="M5.5,6.800000000000001l0.800,1.700l1.700,0.800l-1.700,0.800l-0.800,1.700l-0.800,-1.700l-1.700,-0.800l1.700,-0.800z" fill="#d0d0d0" stroke="#a8a8a8" stroke-width=".6"/></svg>
<svg style="left:299px;top:81px" width="16" height="16" viewBox="0 0 16 16"><defs><radialGradient id="g29" cx=".4" cy=".35" r=".75"><stop offset=".3" stop-color="#ffffff"/><stop offset="1" stop-color="#c4d6f6"/></radialGradient></defs>
<path d="M4.9,10.9L1.9,14.1" stroke="#7a5c14" stroke-width="3.5"/><path d="M4.9,10.9L1.9,14.1" stroke="#e0b848" stroke-width="2.0"/>
<circle cx="8.9" cy="6.8" r="5.4" fill="url(#g29)" stroke="#7c8ca8" stroke-width="1"/></svg>
<svg style="left:337px;top:81px" width="16" height="16" viewBox="0 0 16 16"><defs><radialGradient id="g30" cx=".4" cy=".35" r=".75"><stop offset=".3" stop-color="#ffffff"/><stop offset="1" stop-color="#c4d6f6"/></radialGradient></defs>
<path d="M4.2,11.5L1.5,14.4" stroke="#7a5c14" stroke-width="3.3"/><path d="M4.2,11.5L1.5,14.4" stroke="#e0b848" stroke-width="1.7999999999999998"/>
<circle cx="7.2" cy="8.3" r="4" fill="url(#g30)" stroke="#7c8ca8" stroke-width="1"/>
<path d="M11.800,2c1,-1 3,-1 4,0.200l-1.600,7.700h-1.400z" fill="#ff4614"/><path d="M12.600,2.200c0.600,-0.300 1.400,-0.300 1.800,0l-0.800,4.600z" fill="#ff8a5a"/>
<circle cx="13.500" cy="12.700" r="1.400" fill="#f03a10"/></svg>
<svg style="left:369px;top:81px" width="16" height="16" viewBox="0 0 16 16"><defs><linearGradient id="g31" x1="0" y1="0" x2="1" y2="1"><stop offset="0" stop-color="#92b6fa"/><stop offset="1" stop-color="#3460d4"/></linearGradient></defs>
<rect x="0.500" y="1.200" width="14.200" height="12.400" fill="#f2f6ff" stroke="#c4d2f0" stroke-width=".5"/>
<path d="M0.700,13.900h14.300M14.900,1.400v12.500" stroke="#2a3a64" stroke-width=".9"/>
<rect x="2.300" y="3" width="10.600" height="8.800" fill="url(#g31)" stroke="#4a74d8" stroke-width=".5"/>
<path d="M3.700,5h2.800M3.700,7.300h6.800M3.700,9.600h6.800" stroke="#eef4ff" stroke-width="1"/></svg>
<svg style="left:401px;top:81px" width="16" height="16" viewBox="0 0 16 16"><defs><linearGradient id="g32" x1="0" y1="0" x2="1" y2="0"><stop offset="0" stop-color="#ffffff"/><stop offset=".6" stop-color="#eef4fc"/><stop offset="1" stop-color="#b4c4dc"/></linearGradient></defs>
<path d="M1.400,3.200l2,11c0.200,0.800 8.400,0.800 8.600,0l2,-11z" fill="url(#g32)" stroke="#6a7890" stroke-width=".8"/>
<ellipse cx="7.600" cy="2.800" rx="6.300" ry="1.700" fill="#fdfeff" stroke="#44546c" stroke-width=".9"/>
<ellipse cx="7.600" cy="3" rx="4.600" ry=".9" fill="#dfe8f4"/>
<path d="M7.600,7.700l2.200,3.700h-4.400z" fill="#fff" stroke="#14a01c" stroke-width="1.300" stroke-linejoin="round"/></svg>
<span class="t" style="left:440px;top:75.17px;line-height:16px;font-size:7px;color:#f01018;font-family:'Liberation Sans','DejaVu Sans',sans-serif;font-weight:bold;">PDF</span>
<span class="t" style="left:440px;top:83.40px;line-height:16px;font-size:13px;color:#000;font-family:'Liberation Serif','DejaVu Serif',serif;font-weight:bold;letter-spacing:1.0px;transform:scaleX(1.12);transform-origin:0 0;">T</span>
<svg style="left:439px;top:81px" width="16" height="16" viewBox="0 0 16 16"><path d="M15.700,4.200l-3.700,0.300l-2.600,5l3,-0.200l-3.900,6l6.600,-7.300l-2.800,0.200z" fill="#ffd81a" stroke="#a88208" stroke-width=".6" stroke-linejoin="round"/>
<path d="M14.600,4.700l-2.300,0.200l-2,4l1.200,-0.100z" fill="#fff6b0"/></svg>
<span style="left:493.800px;top:80.500px;font:bold 13.500px/16px 'Liberation Serif','DejaVu Serif',serif;color:#b0406a;">B</span>
<span style="left:527.300px;top:80.500px;font:bold 13.500px/16px 'Liberation Serif','DejaVu Serif',serif;color:#a8a8a8;">I</span>
<span style="left:561.700px;top:80.500px;font:bold 13.500px/16px 'Liberation Serif','DejaVu Serif',serif;color:#a6a6a6;">M</span>
<span class="t" style="left:598px;top:76.72px;line-height:16px;font-size:8.6px;color:#0a50d8;font-family:'Liberation Sans','DejaVu Sans',sans-serif;letter-spacing:0.3px;-webkit-text-stroke:0.25px currentColor;">dvi</span>
<span class="t" style="left:600.9px;top:83.82px;line-height:16px;font-size:8.6px;color:#e0101a;font-family:'Liberation Sans','DejaVu Sans',sans-serif;letter-spacing:0.7px;-webkit-text-stroke:0.25px currentColor;">pdf</span>
<span class="t" style="left:630px;top:76.72px;line-height:16px;font-size:8.6px;color:#0a50d8;font-family:'Liberation Sans','DejaVu Sans',sans-serif;letter-spacing:0.2px;-webkit-text-stroke:0.25px currentColor;">dvi</span>
<span class="t" style="left:637px;top:83.82px;line-height:16px;font-size:8.6px;color:#f0861a;font-family:'Liberation Sans','DejaVu Sans',sans-serif;-webkit-text-stroke:0.25px currentColor;">ps</span>
<span class="t" style="left:662px;top:76.72px;line-height:16px;font-size:8.6px;color:#f0861a;font-family:'Liberation Sans','DejaVu Sans',sans-serif;letter-spacing:-0.2px;-webkit-text-stroke:0.25px currentColor;">ps</span>
<span class="t" style="left:664.8px;top:83.82px;line-height:16px;font-size:8.6px;color:#e0101a;font-family:'Liberation Sans','DejaVu Sans',sans-serif;letter-spacing:0.8px;-webkit-text-stroke:0.25px currentColor;">pdf</span>
<svg style="left:700px;top:81px" width="16" height="16" viewBox="0 0 16 16"><defs><radialGradient id="g34" cx=".4" cy=".35" r=".75"><stop offset=".3" stop-color="#ffffff"/><stop offset="1" stop-color="#c4d6f6"/></radialGradient></defs>
<path d="M4.9,8.4L2,11.2" stroke="#7a5c14" stroke-width="3.1999999999999997"/><path d="M4.9,8.4L2,11.2" stroke="#e0b848" stroke-width="1.6999999999999997"/>
<circle cx="8.2" cy="5" r="4.1" fill="url(#g34)" stroke="#7c8ca8" stroke-width="1"/></svg>
<svg style="left:706px;top:90px" width="12" height="8" viewBox="0 0 12 8"><text x="1" y="6.700" font-family="Liberation Sans,sans-serif" font-weight="bold" font-size="6.800" fill="#0a10d0" stroke="#0a10d0" stroke-width="0.300" textLength="9.400" lengthAdjust="spacingAndGlyphs">DVI</text></svg>
<svg style="left:732px;top:81px" width="16" height="16" viewBox="0 0 16 16"><g transform="translate(0,-0.400) scale(.680)"><defs><linearGradient id="g35" x1="0" y1="0" x2="1" y2="0"><stop offset="0" stop-color="#2a48b8"/><stop offset=".22" stop-color="#f4f8ff"/><stop offset=".48" stop-color="#dfe8ff"/><stop offset=".68" stop-color="#4a6ad8"/><stop offset="1" stop-color="#1c3090"/></linearGradient></defs>
<g id="g35h"><rect x="2.800" y="1.300" width="2.600" height="2.900" rx=".6" fill="url(#g35)" stroke="#2038a0" stroke-width=".5"/>
<rect x="1.600" y="4" width="4.600" height="3.800" rx=".5" fill="url(#g35)" stroke="#2038a0" stroke-width=".5"/>
<rect x="0.300" y="7.500" width="6" height="6" rx=".5" fill="url(#g35)" stroke="#2038a0" stroke-width=".5"/>
<path d="M0.300,13.800h6" stroke="#16246c" stroke-width=".8"/><path d="M1.600,5.900h4.600M0.500,9.200h5.600" stroke="#2a44b4" stroke-width=".7"/></g>
<use href="#g35h" x="9"/>
<rect x="6.300" y="6.200" width="2.900" height="2.400" fill="#2c48b8"/><rect x="7.100" y="6.900" width="1.200" height="1" fill="#c4d4ff"/></g></svg>
<svg style="left:738px;top:90px" width="12" height="8" viewBox="0 0 12 8"><text x="1" y="6.700" font-family="Liberation Sans,sans-serif" font-weight="bold" font-size="6.800" fill="#0a10d0" stroke="#0a10d0" stroke-width="0.300" textLength="9.400" lengthAdjust="spacingAndGlyphs">DVI</text></svg>
<svg style="left:764px;top:81px" width="16" height="16" viewBox="0 0 16 16"><path d="M3,13.500v-7c0,-3.500 2,-5.500 4.500,-5.500c2.500,0 5.500,2.500 5.500,6v6.500z" fill="#f6f6f6" stroke="#4a4a4a" stroke-width=".7"/>
<path d="M2.500,0.800c3,-0.500 7.500,0.500 10.500,4" fill="none" stroke="#101010" stroke-width="1.200"/>
<path d="M6,3.500l1.500,3M9.500,3.500l-1,3" stroke="#606060" stroke-width=".7"/>
<rect x="1.700" y="13.300" width="13.300" height="2.400" fill="#fffacc" stroke="#2a2a2a" stroke-width=".8"/>
<g fill="none" stroke="#c4141c" stroke-width=".9"><circle cx="3.900" cy="6.900" r="3.100"/><circle cx="11.900" cy="6.900" r="3.100"/><path d="M7,6.900h1.800M0.800,6.900h6.200M8.800,6.900h6.200M3.900,3.800v6.200M11.900,3.800v6.200" stroke-width=".6"/></g></svg>
<svg style="left:796px;top:81px" width="16" height="16" viewBox="0 0 16 16"><defs><linearGradient id="g37" x1="0" y1="0" x2="1" y2="1"><stop offset="0" stop-color="#f41414"/><stop offset=".5" stop-color="#c00c10"/><stop offset="1" stop-color="#7c0608"/></linearGradient></defs>
<rect x="0" y="1" width="15" height="14" fill="url(#g37)"/><path d="M2.500,13c2.500,-1.500 4.500,-5 5,-8.500c0.100,-1.300 -1,-1.300 -0.900,0c0.300,3 2.500,5.500 5.800,6.500c1.200,0.300 1.400,-0.800 0.200,-0.900c-3.500,-0.200 -7,0.800 -9.700,2.500c-0.900,0.600 -1.300,0.900 -0.400,0.400z" fill="none" stroke="#f8c8c8" stroke-width=".800"/></svg>
<svg style="left:828px;top:81px" width="16" height="16" viewBox="0 0 16 16"><rect x="0" y="0" width="14.600" height="13.600" fill="#a2a2a2"/><path d="M2.500,13c2.500,-1.500 4.500,-5 5,-8.500c0.100,-1.300 -1,-1.300 -0.900,0c0.300,3 2.500,5.500 5.800,6.500c1.200,0.300 1.400,-0.800 0.200,-0.900c-3.500,-0.200 -7,0.800 -9.700,2.500c-0.900,0.600 -1.300,0.900 -0.400,0.400z" fill="none" stroke="#bcbcbc" stroke-width=".800"/>
<g fill="#c4c4c4" stroke="#adadad" stroke-width=".5"><path d="M6.200,7h2.600v2h0.600v6.500h-4.400v-4.500z"/><path d="M11,7h2.600l2,4v4.500h-4.400v-6.500h-0.600z"/><rect x="9.200" y="10" width="2" height="2"/></g></svg>
<svg style="left:866px;top:81px" width="16" height="16" viewBox="0 0 16 16"><defs><linearGradient id="g39" x1="0" y1="0" x2="1" y2="1"><stop offset=".3" stop-color="#fff"/><stop offset="1" stop-color="#a8bcec"/></linearGradient></defs>
<rect x="3.500" y="0.500" width="12" height="14.500" fill="url(#g39)" stroke="#9fb6e6" stroke-width="1"/>
<path d="M3.500,15.300h12.300M15.800,0.500v14.800" stroke="#3f5f9f" stroke-width="1"/>
<path d="M5.500,2.500h4" stroke="#202020" stroke-width="1.200"/><path d="M5.500,4.500h8M9,6.500h4.500" stroke="#6a6a7a" stroke-width="1"/>
<g transform="translate(5.700,10.500)"><g fill="#f4b01c" stroke="#7a5208" stroke-width=".7"><circle r="3.900"/><circle cx="3.788" cy="1.569" r="1.450"/><circle cx="1.569" cy="3.788" r="1.450"/><circle cx="-1.569" cy="3.788" r="1.450"/><circle cx="-3.788" cy="1.569" r="1.450"/><circle cx="-3.788" cy="-1.569" r="1.450"/><circle cx="-1.569" cy="-3.788" r="1.450"/><circle cx="1.569" cy="-3.788" r="1.450"/><circle cx="3.788" cy="-1.569" r="1.450"/></g>
<circle r="3.700" fill="#f8bc28"/><g fill="#fcd050"><circle cx="3.788" cy="1.569" r="0.900"/><circle cx="1.569" cy="3.788" r="0.900"/><circle cx="-1.569" cy="3.788" r="0.900"/><circle cx="-3.788" cy="1.569" r="0.900"/><circle cx="-3.788" cy="-1.569" r="0.900"/><circle cx="-1.569" cy="-3.788" r="0.900"/><circle cx="1.569" cy="-3.788" r="0.900"/><circle cx="3.788" cy="-1.569" r="0.900"/></g><circle r="1.700" fill="#e08c18" stroke="#9a6408" stroke-width=".5"/><circle r=".700" fill="#fbe08a"/></g></svg>
<div style="left:5px;top:135px;width:948px;height:437px;background:#fff;"></div>
<div style="left:5px;top:135px;width:947px;height:1px;background:#808080;"></div>
<div style="left:5px;top:135px;width:1px;height:436px;background:#808080;"></div>
<div style="left:6px;top:136px;width:945px;height:1px;background:#404040;"></div>
<div style="left:6px;top:136px;width:1px;height:434px;background:#404040;"></div>
<div style="left:951px;top:136px;width:1px;height:435px;background:#d4d0c8;"></div>
<div style="left:6px;top:570px;width:946px;height:1px;background:#d4d0c8;"></div>
<div style="left:952px;top:135px;width:1px;height:437px;background:#fff;"></div>
<div style="left:5px;top:571px;width:948px;height:1px;background:#fff;"></div>
<div style="left:7px;top:137px;width:21px;height:433px;background:linear-gradient(to right,#ffffff 0%,#f4f4f4 50%,#e2e2e2 100%);"></div>
<div style="left:28px;top:137px;width:1px;height:433px;background:#a8a8a8;"></div>
<svg style="left:9px;top:273px" width="16" height="16" viewBox="0 0 16 16">
<defs><linearGradient id="cm" x1="0" y1="0" x2="1" y2="1"><stop offset=".45" stop-color="#fff"/><stop offset="1" stop-color="#b8ccec"/></linearGradient>
<linearGradient id="ca" x1="0" y1="0" x2="0" y2="1"><stop offset="0" stop-color="#2a5ad8"/><stop offset=".5" stop-color="#5a8af6"/><stop offset="1" stop-color="#2448b8"/></linearGradient></defs>
<rect x="0.500" y="0.500" width="15" height="15" fill="url(#cm)" stroke="#9cb2d8" stroke-width="1"/>
<path d="M0.500,15.500h15v-15" fill="none" stroke="#2a4668" stroke-width="1"/>
<path d="M4.200,5.800h4.200v-2.300l4.300,4.500l-4.300,4.500v-2.300h-4.200z" fill="url(#ca)" stroke="#2a50c0" stroke-width=".5"/></svg>
<span class="ln" style="left:32px;top:136.95px;"><span style="color:#800000;">\</span><b style="color:#00693e;">documentclass</b><span style="color:#0000ff;">[</span><span style="color:#00693e;">11</span><span style="color:#7a10e0;">pt</span><span style="color:#0000ff;">]</span><span style="color:#800080;">{</span><span style="color:#800000;">article</span><span style="color:#800080;">}</span></span>
<span class="ln" style="left:32px;top:153.95px;"><span style="color:#800000;">\</span><b style="color:#00693e;">usepackage</b><span style="color:#0000ff;">[cp</span><span style="color:#00693e;">1251</span><span style="color:#0000ff;">]</span><span style="color:#800080;">{</span><span style="color:#0000ff;">inputenc</span><span style="color:#800080;">}</span></span>
<span class="ln" style="left:32px;top:170.95px;"><span style="color:#800000;">\</span><b style="color:#00693e;">usepackage</b><span style="color:#800080;">{</span><span style="color:#0000ff;">amsfonts</span><span style="color:#800080;">}</span></span>
<span class="ln" style="left:32px;top:187.95px;"><span style="color:#800000;">\</span><b style="color:#00693e;">usepackage</b><span style="color:#800080;">{</span><span style="color:#0000ff;">srcltx</span><span style="color:#800080;">}</span></span>
<span class="ln" style="left:32px;top:204.95px;"><span style="color:#800000;">\</span><b style="color:#00693e;">usepackage</b><span style="color:#0000ff;">[T</span><span style="color:#00693e;">2</span><span style="color:#0000ff;">A]</span><span style="color:#800080;">{</span><span style="color:#0000ff;">fontenc</span><span style="color:#800080;">}</span></span>
<span class="ln" style="left:32px;top:221.95px;"><span style="color:#800000;">\</span><b style="color:#00693e;">usepackage</b><span style="color:#0000ff;">[english</span><span style="color:#800000;">,</span><span style="color:#0000ff;">russian</span><span style="color:#800000;">,</span><span style="color:#0000ff;">ukrainian]</span><span style="color:#800080;">{</span><span style="color:#0000ff;">babel</span><span style="color:#800080;">}</span></span>
<span class="ln" style="left:32px;top:238.95px;"><span style="color:#800000;">\</span><span style="color:#000080;">def</span><span style="color:#800000;">\</span><span style="color:#7a10e0;">emline</span><span style="color:#800080;">#</span><span style="color:#00693e;">1</span><span style="color:#800080;">#</span><span style="color:#00693e;">2</span><span style="color:#800080;">#</span><span style="color:#00693e;">3</span><span style="color:#800080;">#</span><span style="color:#00693e;">4</span><span style="color:#800080;">#</span><span style="color:#00693e;">5</span><span style="color:#800080;">#</span><span style="color:#00693e;">6</span><span style="color:#800080;">{</span><span style="color:#800000;">\</span><span style="color:#000080;">put</span><span style="color:#0000ff;">(</span><span style="color:#800080;">#</span><span style="color:#00693e;">1</span><span style="color:#800000;">,</span><span style="color:#800080;">#</span><span style="color:#00693e;">2</span><span style="color:#0000ff;">)</span><span style="color:#800080;">{</span><span style="color:#800000;">\</span><span style="color:#000080;">special</span><span style="color:#800080;">{</span><span style="color:#000;">em</span><b style="color:#800000;">:</b><span style="color:#000;">moveto</span><span style="color:#800080;">}}</span><span style="color:#800000;">\</span><span style="color:#000080;">put</span><span style="color:#0000ff;">(</span><span style="color:#800080;">#</span><span style="color:#00693e;">4</span><span style="color:#800000;">,</span><span style="color:#800080;">#</span><span style="color:#00693e;">5</span><span style="color:#0000ff;">)</span><span style="color:#800080;">{</span><span style="color:#800000;">\</span><span style="color:#000080;">special</span><span style="color:#800080;">{</span><span style="color:#000;">em</span><b style="color:#800000;">:</b><span style="color:#000;">lineto</span><span style="color:#800080;">}}}</span><span style="color:#800000;">\</span><span style="color:#000080;">def</span><span style="color:#800000;">\</span><span style="color:#7a10e0;">newpic</span><span style="color:#800080;">#</span><span style="color:#00693e;">1</span><span style="color:#800080;">{}</span></span>
<div style="left:88px;top:271px;width:64px;height:1px;background:#009900;"></div>
<span class="ln" style="left:32px;top:255.95px;"><span style="color:#800000;">\</span><span style="color:#0000ff;">begin</span><span style="color:#800080;">{</span><span style="color:#009900;">document</span><span style="color:#800080;">}</span></span>
<div style="left:32px;top:288px;width:64px;height:1px;background:#ff0000;"></div>
<div style="left:104px;top:288px;width:32px;height:1px;background:#ff0000;"></div>
<span class="ln" style="left:32px;top:272.95px;"><span style="color:#ff0000;">Тестовий</span><span style="color:#ff0000;"> </span><span style="color:#ff0000;">файл</span><span style="color:#800000;">.</span><span style="color:#0000ff;">\\</span><span style="color:#000;"> </span><span style="color:#0000ff;font-style:italic;">$</span><span style="color:#800000;">\alpha\beta\gamma ... \chi\psi\omega</span><span style="color:#0000ff;">\\</span><span style="color:#800000;">\</span><span style="color:#7a10e0;font-style:italic;">forall</span><span style="color:#800000;">\exists\nabla</span><span style="color:#0000ff;font-style:italic;">$</span></span>
<div style="left:72px;top:305px;width:64px;height:1px;background:#009900;"></div>
<span class="ln" style="left:32px;top:289.95px;"><span style="color:#800000;">\</span><span style="color:#0000ff;">end</span><span style="color:#800080;">{</span><span style="color:#009900;">document</span><span style="color:#800080;">}</span></span>
<div style="left:168px;top:273px;width:2px;height:17px;background:#000;"></div>
<div style="left:5px;top:574px;width:33px;height:1px;background:#808080;"></div>
<div style="left:5px;top:574px;width:1px;height:15px;background:#808080;"></div>
<div style="left:5px;top:589px;width:34px;height:1px;background:#fff;"></div>
<div style="left:38px;top:574px;width:1px;height:16px;background:#fff;"></div>
<div style="left:41px;top:574px;width:18px;height:1px;background:#808080;"></div>
<div style="left:41px;top:574px;width:1px;height:15px;background:#808080;"></div>
<div style="left:41px;top:589px;width:19px;height:1px;background:#fff;"></div>
<div style="left:59px;top:574px;width:1px;height:16px;background:#fff;"></div>
<div style="left:62px;top:574px;width:96px;height:1px;background:#808080;"></div>
<div style="left:62px;top:574px;width:1px;height:15px;background:#808080;"></div>
<div style="left:62px;top:589px;width:97px;height:1px;background:#fff;"></div>
<div style="left:158px;top:574px;width:1px;height:16px;background:#fff;"></div>
<div style="left:162px;top:574px;width:66px;height:1px;background:#808080;"></div>
<div style="left:162px;top:574px;width:1px;height:15px;background:#808080;"></div>
<div style="left:162px;top:589px;width:67px;height:1px;background:#fff;"></div>
<div style="left:228px;top:574px;width:1px;height:16px;background:#fff;"></div>
<div style="left:231px;top:574px;width:66px;height:1px;background:#808080;"></div>
<div style="left:231px;top:574px;width:1px;height:15px;background:#808080;"></div>
<div style="left:231px;top:589px;width:67px;height:1px;background:#fff;"></div>
<div style="left:297px;top:574px;width:1px;height:16px;background:#fff;"></div>
<div style="left:300px;top:574px;width:39px;height:1px;background:#808080;"></div>
<div style="left:300px;top:574px;width:1px;height:15px;background:#808080;"></div>
<div style="left:300px;top:589px;width:40px;height:1px;background:#fff;"></div>
<div style="left:339px;top:574px;width:1px;height:16px;background:#fff;"></div>
<div style="left:343px;top:574px;width:47px;height:1px;background:#808080;"></div>
<div style="left:343px;top:574px;width:1px;height:15px;background:#808080;"></div>
<div style="left:343px;top:589px;width:48px;height:1px;background:#fff;"></div>
<div style="left:390px;top:574px;width:1px;height:16px;background:#fff;"></div>
<div style="left:394px;top:574px;width:36px;height:1px;background:#808080;"></div>
<div style="left:394px;top:574px;width:1px;height:15px;background:#808080;"></div>
<div style="left:394px;top:589px;width:37px;height:1px;background:#fff;"></div>
<div style="left:430px;top:574px;width:1px;height:16px;background:#fff;"></div>
<div style="left:434px;top:574px;width:39px;height:1px;background:#808080;"></div>
<div style="left:434px;top:574px;width:1px;height:15px;background:#808080;"></div>
<div style="left:434px;top:589px;width:40px;height:1px;background:#fff;"></div>
<div style="left:473px;top:574px;width:1px;height:16px;background:#fff;"></div>
<div style="left:477px;top:574px;width:36px;height:1px;background:#808080;"></div>
<div style="left:477px;top:574px;width:1px;height:15px;background:#808080;"></div>
<div style="left:477px;top:589px;width:37px;height:1px;background:#fff;"></div>
<div style="left:513px;top:574px;width:1px;height:16px;background:#fff;"></div>
<div style="left:517px;top:574px;width:116px;height:1px;background:#808080;"></div>
<div style="left:517px;top:574px;width:1px;height:15px;background:#808080;"></div>
<div style="left:517px;top:589px;width:117px;height:1px;background:#fff;"></div>
<div style="left:633px;top:574px;width:1px;height:16px;background:#fff;"></div>
<div style="left:636px;top:574px;width:37px;height:1px;background:#808080;"></div>
<div style="left:636px;top:574px;width:1px;height:15px;background:#808080;"></div>
<div style="left:636px;top:589px;width:38px;height:1px;background:#fff;"></div>
<div style="left:673px;top:574px;width:1px;height:16px;background:#fff;"></div>
<div style="left:676px;top:574px;width:127px;height:1px;background:#808080;"></div>
<div style="left:676px;top:574px;width:1px;height:15px;background:#808080;"></div>
<div style="left:676px;top:589px;width:128px;height:1px;background:#fff;"></div>
<div style="left:803px;top:574px;width:1px;height:16px;background:#fff;"></div>
<div style="left:806px;top:574px;width:146px;height:1px;background:#808080;"></div>
<div style="left:806px;top:574px;width:1px;height:15px;background:#808080;"></div>
<div style="left:806px;top:589px;width:147px;height:1px;background:#fff;"></div>
<div style="left:952px;top:574px;width:1px;height:16px;background:#fff;"></div>
<span class="t" style="left:9.9px;top:574.19px;line-height:16px;font-size:11px;color:#008080;font-family:'Liberation Sans','DejaVu Sans',sans-serif;font-weight:bold;">?</span>
<span class="t" style="left:19px;top:574.19px;line-height:16px;font-size:11px;color:#008080;font-family:'Liberation Sans','DejaVu Sans',sans-serif;font-weight:bold;letter-spacing:0.2px;">...</span>
<span class="t" style="left:46.7px;top:574.19px;line-height:16px;font-size:11px;color:#8b0000;font-family:'Liberation Sans','DejaVu Sans',sans-serif;letter-spacing:0.1px;">A</span>
<span class="t" style="left:99.8px;top:574.19px;line-height:16px;font-size:11px;color:#000;font-family:'Liberation Sans','DejaVu Sans',sans-serif;letter-spacing:0.067px;">9:18</span>
<span class="t" style="left:188.6px;top:574.19px;line-height:16px;font-size:11px;color:#000080;font-family:'Liberation Sans','DejaVu Sans',sans-serif;letter-spacing:-0.6px;">10</span>
<span class="t" style="left:232.5px;top:574.19px;line-height:16px;font-size:11px;color:#8b0000;font-family:'Liberation Sans','DejaVu Sans',sans-serif;letter-spacing:-0.071px;">Modified</span>
<span class="t" style="left:307px;top:574.19px;line-height:16px;font-size:11px;color:#0000ff;font-family:'Liberation Sans','DejaVu Sans',sans-serif;letter-spacing:-0.433px;">Wrap</span>
<span class="t" style="left:350px;top:574.19px;line-height:16px;font-size:11px;color:#000080;font-family:'Liberation Sans','DejaVu Sans',sans-serif;letter-spacing:0.16px;">Indent</span>
<span class="t" style="left:402.9px;top:574.19px;line-height:16px;font-size:11px;color:#000080;font-family:'Liberation Sans','DejaVu Sans',sans-serif;letter-spacing:-0.5px;">INS</span>
<span class="t" style="left:441.5px;top:574.19px;line-height:16px;font-size:11px;color:#000080;font-family:'Liberation Sans','DejaVu Sans',sans-serif;letter-spacing:-0.433px;">LINE</span>
<span class="t" style="left:483.8px;top:574.19px;line-height:16px;font-size:11px;color:#8b0000;font-family:'Liberation Sans','DejaVu Sans',sans-serif;letter-spacing:-0.325px;">Spell</span>
<span class="t" style="left:566.4px;top:574.19px;line-height:16px;font-size:11px;color:#000080;font-family:'Liberation Sans','DejaVu Sans',sans-serif;letter-spacing:-0.95px;">TeX</span>
<span class="t" style="left:643.9px;top:574.19px;line-height:16px;font-size:11px;color:#000080;font-family:'Liberation Sans','DejaVu Sans',sans-serif;letter-spacing:-0.225px;">--src</span>
<span class="t" style="left:714.3px;top:574.19px;line-height:16px;font-size:11px;color:#000;font-family:'Liberation Sans','DejaVu Sans',sans-serif;letter-spacing:0.011px;">WinEdt.prj</span>
<div style="left:940px;top:577px;width:13px;height:13px;background:#d4d0c8;"></div>
<svg style="left:939px;top:576px" width="13" height="13" viewBox="0 0 13 13" shape-rendering="crispEdges"><rect width="13" height="13" fill="none"/><path d="M0,12h1v1h-1zM1,11h1v1h-1zM2,10h1v1h-1zM3,9h1v1h-1zM4,8h1v1h-1zM5,7h1v1h-1zM6,6h1v1h-1zM7,5h1v1h-1zM8,4h1v1h-1zM9,3h1v1h-1zM10,2h1v1h-1zM11,1h1v1h-1zM12,0h1v1h-1zM4,12h1v1h-1zM5,11h1v1h-1zM6,10h1v1h-1zM7,9h1v1h-1zM8,8h1v1h-1zM9,7h1v1h-1zM10,6h1v1h-1zM11,5h1v1h-1zM12,4h1v1h-1zM8,12h1v1h-1zM9,11h1v1h-1zM10,10h1v1h-1zM11,9h1v1h-1zM12,8h1v1h-1zM12,12h1v1h-1z" fill="#fff"/><path d="M1,12h1v1h-1zM2,11h1v1h-1zM3,10h1v1h-1zM4,9h1v1h-1zM5,8h1v1h-1zM6,7h1v1h-1zM7,6h1v1h-1zM8,5h1v1h-1zM9,4h1v1h-1zM10,3h1v1h-1zM11,2h1v1h-1zM12,1h1v1h-1zM2,12h1v1h-1zM3,11h1v1h-1zM4,10h1v1h-1zM5,9h1v1h-1zM6,8h1v1h-1zM7,7h1v1h-1zM8,6h1v1h-1zM9,5h1v1h-1zM10,4h1v1h-1zM11,3h1v1h-1zM12,2h1v1h-1zM5,12h1v1h-1zM6,11h1v1h-1zM7,10h1v1h-1zM8,9h1v1h-1zM9,8h1v1h-1zM10,7h1v1h-1zM11,6h1v1h-1zM12,5h1v1h-1zM6,12h1v1h-1zM7,11h1v1h-1zM8,10h1v1h-1zM9,9h1v1h-1zM10,8h1v1h-1zM11,7h1v1h-1zM12,6h1v1h-1zM9,12h1v1h-1zM10,11h1v1h-1zM11,10h1v1h-1zM12,9h1v1h-1zM10,12h1v1h-1zM11,11h1v1h-1zM12,10h1v1h-1z" fill="#808080"/></svg>
</body></html>
